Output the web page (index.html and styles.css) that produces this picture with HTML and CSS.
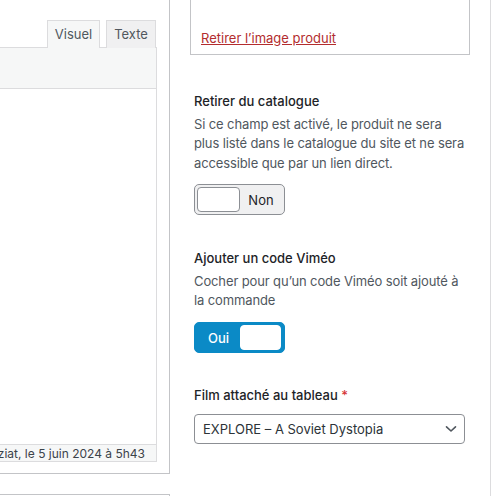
FILE: index.html
```html
<!DOCTYPE html>
<html lang="fr">
<head>
<meta charset="utf-8">
<title>Produit</title>
<link rel="stylesheet" href="styles.css">
</head>
<body>
<div class="page">
  <div class="main">
    <div class="postbox">
      <div class="editor">
        <div class="tabs">
          <span class="tab tab-active">Visuel</span>
          <span class="tab">Texte</span>
        </div>
        <div class="toolbar"></div>
        <div class="content"></div>
        <div class="status"><span class="status-text">Dernière modification par mziat, le 5 juin 2024 à 5h43</span></div>
      </div>
    </div>
    <div class="postbox postbox-next"></div>
  </div>
  <div class="sidebar">
    <div class="imagebox">
      <p class="img-hint">Cliquez sur l’image pour la modifier ou la mettre à jour</p>
      <a class="remove-link" href="#">Retirer l’image produit</a>
    </div>

    <div class="field field-first">
      <div class="label">Retirer du catalogue</div>
      <p class="desc">Si ce champ est activé, le produit ne sera plus listé dans le catalogue du site et ne sera accessible que par un lien direct.</p>
      <div class="switch">
        <span class="knob"></span>
        <span class="switch-text">Non</span>
      </div>
    </div>

    <div class="field field-second">
      <div class="label">Ajouter un code Viméo</div>
      <p class="desc">Cocher pour qu’un code Viméo soit ajouté à la commande</p>
      <div class="switch switch-on">
        <span class="switch-text">Oui</span>
        <span class="knob"></span>
      </div>
    </div>

    <div class="field field-third">
      <div class="label">Film attaché au tableau <span class="req">*</span></div>
      <div class="select">
        <span class="select-text">EXPLORE – A Soviet Dystopia</span>
        <svg class="chevron" width="12" height="8" viewBox="0 0 12 8"><path d="M1.5 1.8 L6 6 L10.5 1.8" fill="none" stroke="#50575e" stroke-width="1.6" stroke-linecap="round" stroke-linejoin="round"/></svg>
      </div>
    </div>
  </div>
</div>
</body>
</html>
```

FILE: styles.css
```css
* { box-sizing: border-box; }
html, body { margin: 0; padding: 0; background: #fff; }
body {
  font-family: Inter, "Open Sans", "Liberation Sans", sans-serif;
  font-size: 13px;
  color: #1d2327;
  overflow: hidden;
  width: 492px;
  height: 496px;
}
.page {
  display: flex;
  align-items: flex-start;
  height: 496px;
  overflow: hidden;
}
.main {
  width: 170px;
  flex: none;
}
.postbox {
  border-right: 1px solid #c3c4c7;
  border-bottom: 1px solid #c3c4c7;
  height: 474px;
  padding: 20px 12px 0 0;
}
.postbox-next {
  height: 2px;
  margin-top: 20px;
  border-top: 1px solid #c3c4c7;
  border-bottom: none;
  padding: 0;
}
.editor {
  margin-left: -300px;
  display: flex;
  flex-direction: column;
}
.tabs {
  display: flex;
  justify-content: flex-end;
  gap: 6px;
  height: 28px;
  border-bottom: 1px solid #dcdcde;
  padding-right: 1px;
}
.tab {
  width: 50px;
  height: 29px;
  border: 1px solid #dcdcde;
  background: #f0f0f1;
  color: #50575e;
  font-size: 13px;
  line-height: 27px;
  text-align: center;
}
.tab-active {
  width: 53px;
  background: #f6f7f7;
  border-bottom-color: #f6f7f7;
}
.toolbar {
  height: 41px;
  background: #f6f7f7;
  border-left: 1px solid #dcdcde;
  border-right: 1px solid #dcdcde;
  border-bottom: 1px solid #dcdcde;
}
.content {
  height: 355px;
  border-left: 1px solid #dcdcde;
  border-right: 1px solid #dcdcde;
  background: #fff;
}
.status {
  height: 18px;
  display: flex;
  justify-content: flex-end;
  background: #f6f7f7;
  border: 1px solid #dcdcde;
  padding-right: 11px;
  overflow: visible;
}
.status-text {
  white-space: nowrap;
  font-size: 12px;
  line-height: 17px;
  color: #3c434a;
  flex: none;
}
.sidebar {
  width: 321px;
  flex: none;
  height: 496px;
  border-right: 1px solid #dcdcde;
  padding: 0 20px;
}
.imagebox {
  margin-top: -30px;
  height: 85px;
  border: 1px solid #c3c4c7;
  padding: 0 10px;
}
.img-hint {
  margin: 0;
  padding-top: 12px;
  font-size: 13px;
  line-height: 19.5px;
  color: #646970;
  white-space: nowrap;
  overflow: hidden;
}
.remove-link {
  display: inline-block;
  margin-top: 26px;
  color: #b32d2e;
  font-size: 13px;
  line-height: 19.5px;
}
.field {
  padding: 0 4px;
}
.field-first { margin-top: 37px; }
.field-second { margin-top: 34px; }
.field-third { margin-top: 33px; }
.label {
  font-weight: 500;
  font-size: 13px;
  line-height: 19.5px;
  color: #1d2327;
}
.req { color: #d63638; }
.desc {
  margin: 3px 0 0;
  font-size: 13px;
  letter-spacing: -0.12px;
  line-height: 19.5px;
  color: #50575e;
}
.switch {
  margin-top: 11px;
  width: 91px;
  height: 31px;
  border: 1px solid #8c8f94;
  border-radius: 5px;
  background: #f0f0f1;
  display: flex;
  align-items: center;
  padding: 0 2px;
}
.switch .knob {
  width: 43px;
  height: 25px;
  border: 1px solid #8c8f94;
  border-radius: 4px;
  background: #fff;
  flex: none;
}
.switch-text {
  flex: 1;
  text-align: center;
  font-size: 13px;
  line-height: 15px;
  padding-top: 2px;
  color: #1d2327;
}
.switch-on {
  background: #0b8ac6;
  border-color: #0b8ac6;
  padding: 0 3px 0 2px;
}
.switch-on .knob {
  border-color: #fff;
  width: 41px;
}
.switch-on .switch-text {
  color: #fff;
  font-weight: 500;
}
.select {
  margin-top: 9px;
  width: 271px;
  height: 30px;
  border: 1px solid #8c8f94;
  border-radius: 4px;
  display: flex;
  align-items: center;
  justify-content: space-between;
  padding: 0 7px 0 8px;
}
.select-text {
  font-size: 13px;
  color: #2c3338;
}
.chevron { display: block; }
```
